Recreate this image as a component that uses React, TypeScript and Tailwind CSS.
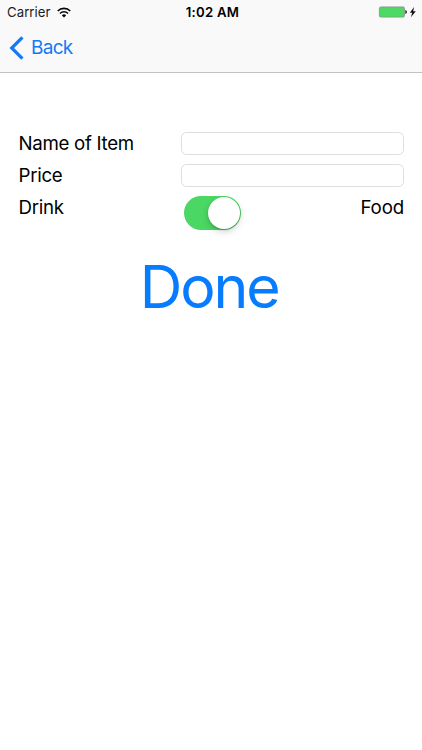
import React from "react";

function StatusBar() {
  return (
    <div className="grid h-6 grid-cols-[1fr_auto_1fr] items-center pr-1.5 pl-[7px] text-[13.2px] leading-6 text-[#1c1c1c]">
      <div className="flex items-center gap-1.5">
        <span className="tracking-[0.05px]">Carrier</span>
        <svg width="14" height="11" viewBox="0 0 14 11" fill="none" stroke="#050505" strokeWidth="1.6">
          <path d="M0.7 4A8.9 8.9 0 0 1 13.3 4" />
          <path d="M3 6.5A5.6 5.6 0 0 1 11 6.5" />
          <path d="M4.9 8.4A3 3 0 0 1 9.1 8.4L7 10.5Z" fill="#050505" stroke="none" />
        </svg>
      </div>
      <span className="pl-[2px] font-semibold tracking-[0.25px] text-black">1:02 AM</span>
      <div className="flex items-center justify-end">
        <svg width="38" height="12" viewBox="0 0 38 12">
          <rect x="1.4" y="0.9" width="25.1" height="10.2" rx="1.5" fill="#4cd964" stroke="#8b8b8b" strokeWidth="0.8" />
          <rect x="2.2" y="1.7" width="23.5" height="8.6" rx="0.8" fill="#4cd964" />
          <path d="M27.4 4.1Q28.9 4.4 28.9 6T27.4 7.9Z" fill="#111" />
          <path d="M36 1L31.9 6.8H34.2L32.9 11.2L37.8 5.2H35.2Z" fill="#111" />
        </svg>
      </div>
    </div>
  );
}

function Field({ label }: { label: string }) {
  return (
    <label className="flex h-8 items-start">
      <span className="w-[162.5px] leading-[26px]">{label}</span>
      <input aria-label={label} className="mt-px h-[23px] min-w-0 flex-1 rounded-[5.5px] border border-[#dedede] bg-white px-2 outline-none" />
    </label>
  );
}

export default function App() {
  return (
    <main className="h-[750px] w-full overflow-hidden bg-white font-[Inter,sans-serif] text-black">
      <header className="h-[73px] border-b border-[#c2c2c4] bg-[#f9f9f9]">
        <StatusBar />
        <button className="flex h-12 items-center gap-[7px] pl-[9px] text-[19px] tracking-[-0.7px] text-[#1479f7]">
          <svg width="15" height="24" viewBox="0 0 15 24" fill="none" stroke="#1479f7" strokeWidth="3.2">
            <path d="M13.4 1.3L2.7 12L13.4 22.7" />
          </svg>
          Back
        </button>
      </header>
      <form className="pt-[58px] pr-[18px] pl-[18.5px] text-[18.7px] tracking-[-0.3px]">
        <Field label="Name of Item" />
        <Field label="Price" />
        <div className="flex items-start">
          <span className="w-[165px] leading-[26px]">Drink</span>
          <button type="button" role="switch" aria-checked="true" aria-label="Food" className="mt-[0.6px] flex h-[34.5px] w-[57.5px] items-center justify-end rounded-full bg-[#4bd763] pr-[1.5px]">
            <span className="size-8 rounded-full bg-white shadow-[0_3px_7px_rgba(0,0,0,0.16),0_1px_2px_rgba(0,0,0,0.18)]" />
          </button>
          <span className="ml-auto leading-[26px] tracking-[-0.15px]">Food</span>
        </div>
        <button type="button" className="mx-auto mt-[21px] block pr-[4px] text-[59px] leading-[71px] tracking-[-2.1px] text-[#087cff]">Done</button>
      </form>
    </main>
  );
}
